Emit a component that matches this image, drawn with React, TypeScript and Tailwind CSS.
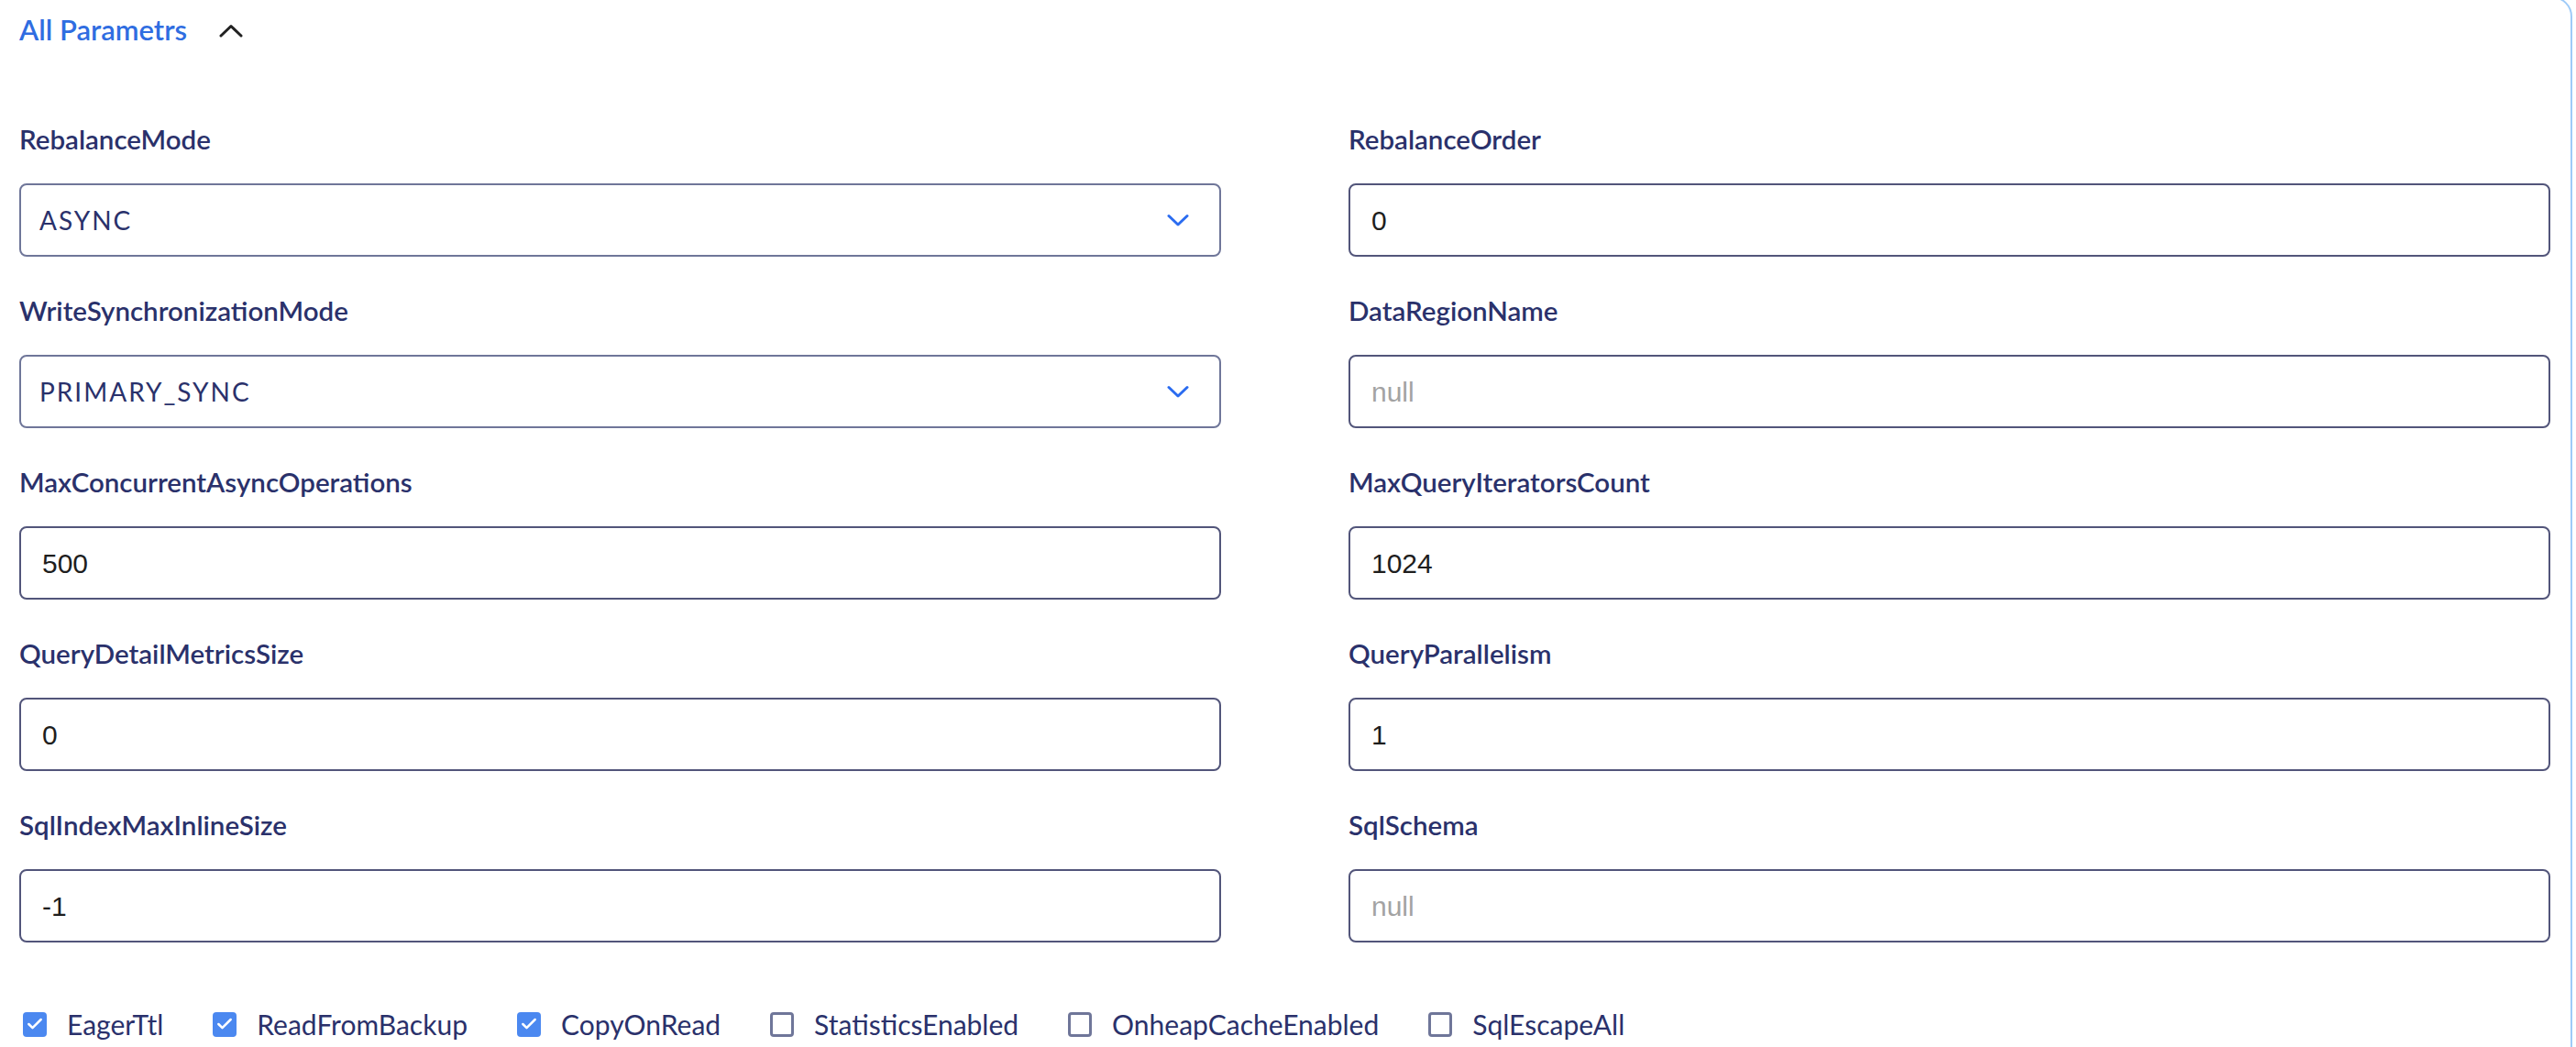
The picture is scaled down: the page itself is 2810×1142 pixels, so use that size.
import { Check } from 'lucide-react';

type Field = {
  label: string;
  value: string;
  kind: 'select' | 'input';
  placeholder?: boolean;
};

const fields: Field[] = [
  { label: 'RebalanceMode', value: 'ASYNC', kind: 'select' },
  { label: 'RebalanceOrder', value: '0', kind: 'input' },
  { label: 'WriteSynchronizationMode', value: 'PRIMARY_SYNC', kind: 'select' },
  { label: 'DataRegionName', value: 'null', kind: 'input', placeholder: true },
  { label: 'MaxConcurrentAsyncOperations', value: '500', kind: 'input' },
  { label: 'MaxQueryIteratorsCount', value: '1024', kind: 'input' },
  { label: 'QueryDetailMetricsSize', value: '0', kind: 'input' },
  { label: 'QueryParallelism', value: '1', kind: 'input' },
  { label: 'SqlIndexMaxInlineSize', value: '-1', kind: 'input' },
  { label: 'SqlSchema', value: 'null', kind: 'input', placeholder: true },
];

const flags = [
  { label: 'EagerTtl', checked: true },
  { label: 'ReadFromBackup', checked: true },
  { label: 'CopyOnRead', checked: true },
  { label: 'StatisticsEnabled', checked: false },
  { label: 'OnheapCacheEnabled', checked: false },
  { label: 'SqlEscapeAll', checked: false },
];

function FieldBox({ field }: { field: Field }) {
  if (field.kind === 'select') {
    return (
      <div className="h-[80px] border-2 border-[#6f7699] rounded-[8px] flex items-center justify-between pl-[20px] pr-[33px]">
        <span className="text-[28px] tracking-[2px] text-[#2a316b] font-['Lato',sans-serif]">{field.value}</span>
        <svg width="24" height="15" viewBox="0 0 24 15" fill="none">
          <path d="M2 2.5 12 12 22 2.5" stroke="#2b6cf0" strokeWidth="3" strokeLinecap="round" strokeLinejoin="round" />
        </svg>
      </div>
    );
  }
  return (
    <div className="h-[80px] border-2 border-[#52557a] rounded-[8px] flex items-center pl-[23px]">
      <span
        className={
          field.placeholder
            ? "text-[30px] text-[#a3a3a3] font-['Liberation_Sans',Arial,sans-serif]"
            : "text-[30px] text-[#1e1e1e] font-['Liberation_Sans',Arial,sans-serif]"
        }
      >
        {field.value}
      </span>
    </div>
  );
}

export default function App() {
  return (
    <div className="w-[2810px] h-[1142px] overflow-hidden bg-white">
      <div className="-mt-[4px] -ml-[16px] mr-[4px] h-[1200px] border-2 border-[#9ecbf8] rounded-[22px] pl-[35px] pr-[22px] pt-[16px] font-['Lato',sans-serif]">
        <div className="flex items-center h-[36px]">
          <span className="text-[31px] leading-[36px] font-semibold text-[#2f6de1]">All Parametrs</span>
          <svg className="ml-[35px] mt-[2px]" width="26" height="15" viewBox="0 0 26 15" fill="none">
            <path d="M2 13 13 2.5 24 13" stroke="#222222" strokeWidth="3" strokeLinecap="round" strokeLinejoin="round" />
          </svg>
        </div>

        <div className="mt-[84px] grid grid-cols-2 gap-x-[139px] gap-y-[41px]">
          {fields.map((field) => (
            <div key={field.label} className="flex flex-col">
              <label className="text-[29.5px] leading-[36px] font-semibold text-[#2a316b] mb-[30px]">{field.label}</label>
              <FieldBox field={field} />
            </div>
          ))}
        </div>

        <div className="mt-[71px] ml-[4px] flex items-center gap-x-[54px] h-[36px]">
          {flags.map((flag) => (
            <label key={flag.label} className="flex items-center gap-x-[22px]">
              {flag.checked ? (
                <span className="w-[26px] h-[27px] rounded-[4px] bg-[#4b88f0] flex items-center justify-center">
                  <Check className="w-[20px] h-[20px] text-white" strokeWidth={3} />
                </span>
              ) : (
                <span className="w-[26px] h-[27px] rounded-[4px] border-[3px] border-[#6f7699] bg-white" />
              )}
              <span className="text-[30px] leading-[36px] text-[#2a316b]">{flag.label}</span>
            </label>
          ))}
        </div>
      </div>
    </div>
  );
}
